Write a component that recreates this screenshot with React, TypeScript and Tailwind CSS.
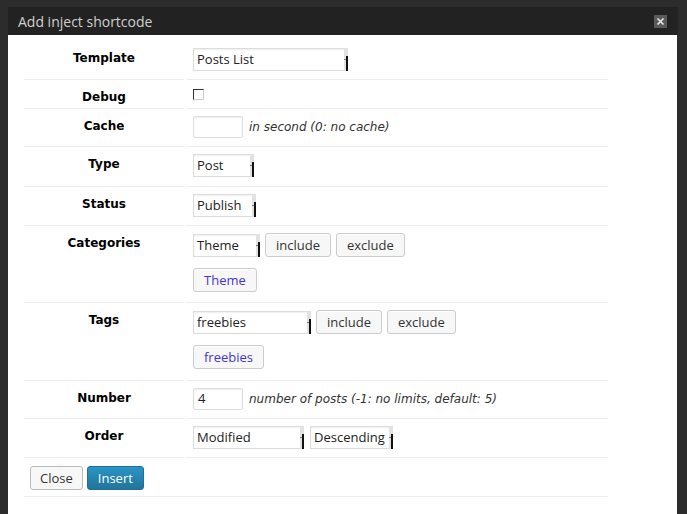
import React from 'react';

const label = "font-['DejaVu_Sans',sans-serif] font-bold text-[12px] leading-[16px] text-black";
const ui = "font-['Open_Sans',sans-serif] text-[13px]";
const hint = "font-['DejaVu_Sans',sans-serif] italic text-[12px] text-[#333]";

function Select({ value, width }: { value: string; width: string }) {
  return (
    <div
      className={`relative h-[23px] ${width} border border-[#dcdcdc] bg-white shadow-[inset_0_1px_2px_rgba(0,0,0,0.07)] flex items-center pl-[3px] ${ui} text-[#222]`}
    >
      <span className="leading-none">{value}</span>
      {/* old-style arrow strip */}
      <span className="absolute right-[-1px] top-[-1px] bottom-[-1px] w-[4px] bg-[#e2e2e2]">
        <span className="absolute right-0 top-[8px] bottom-0 w-[2px] bg-[#111]" />
        <span className="absolute right-[2px] top-[11px] w-[2px] h-[1px] bg-[#777]" />
      </span>
    </div>
  );
}

function Btn({ children, blue }: { children: React.ReactNode; blue?: boolean }) {
  return (
    <button
      className={`h-[24px] px-[10px] rounded-[3px] border border-[#cccccc] bg-[#f7f7f7] shadow-[0_1px_0_#fff_inset] ${ui} leading-none ${blue ? 'text-[#4433dd]' : 'text-[#333]'}`}
    >
      {children}
    </button>
  );
}

function Input({ value }: { value?: string }) {
  return (
    <div
      className={`h-[22px] w-[50px] border border-[#dddddd] rounded-[2px] bg-white shadow-[inset_0_1px_2px_rgba(0,0,0,0.07)] flex items-center pl-[4px] ${ui} text-[#222]`}
    >
      {value}
    </div>
  );
}

function Row({
  name,
  children,
  pt = 'pt-[7px]',
  pb = 'pb-[8px]',
}: {
  name: string;
  children: React.ReactNode;
  pt?: string;
  pb?: string;
}) {
  return (
    <div className="flex">
      <div className={`w-[160px] shrink-0 border-b border-[#ececec] pt-[9px] text-center ${label}`}>{name}</div>
      <div className={`ml-[3px] flex-1 border-b border-[#ececec] ${pt} ${pb} pl-[6px]`}>{children}</div>
    </div>
  );
}

export default function App() {
  return (
    <div className="w-[687px] h-[514px] overflow-hidden bg-[#2c2c2c] pt-[7px] pl-[8px]">
      <div className="w-[670px] h-[507px] flex flex-col">
        <div className="h-[28px] bg-[#222222] flex items-center justify-between pl-[10px] pr-[11px]">
          <span className="font-['Open_Sans',sans-serif] text-[14px] text-[#d0d0d0]">Add inject shortcode</span>
          <span className="w-[13px] h-[13px] bg-[#5a5a5a] flex items-center justify-center">
            <svg width="9" height="9" viewBox="0 0 9 9">
              <path d="M1.5 1.5l6 6M7.5 1.5l-6 6" stroke="#e8e8e8" strokeWidth="1.6" />
            </svg>
          </span>
        </div>
        <div className="flex-1 bg-white pt-[6px] pl-[16px] w-[669px]">
          <div className="w-[584px]">
            <Row name="Template">
              <Select value="Posts List" width="w-[155px]" />
            </Row>
            <Row name="Debug" pb="pb-[7px]">
              <div className="h-[14px] flex items-center">
                <span className="w-[11px] h-[11px] border-t border-l border-[#333] border-b border-r border-b-[#ccc] border-r-[#ccc] bg-white" />
              </div>
            </Row>
            <Row name="Cache">
              <div className="flex items-center gap-[6px]">
                <Input />
                <span className={hint}>in second (0: no cache)</span>
              </div>
            </Row>
            <Row name="Type" pb="pb-[9px]">
              <Select value="Post" width="w-[61px]" />
            </Row>
            <Row name="Status">
              <Select value="Publish" width="w-[63px]" />
            </Row>
            <Row name="Categories" pb="pb-[10px]">
              <div className="flex items-center gap-[5px]">
                <Select value="Theme" width="w-[67px]" />
                <Btn>include</Btn>
                <Btn>exclude</Btn>
              </div>
              <div className="mt-[11px] flex">
                <Btn blue>Theme</Btn>
              </div>
            </Row>
            <Row name="Tags" pb="pb-[11px]">
              <div className="flex items-center gap-[5px]">
                <Select value="freebies" width="w-[118px]" />
                <Btn>include</Btn>
                <Btn>exclude</Btn>
              </div>
              <div className="mt-[11px] flex">
                <Btn blue>freebies</Btn>
              </div>
            </Row>
            <Row name="Number">
              <div className="flex items-center gap-[6px]">
                <Input value="4" />
                <span className={hint}>number of posts (-1: no limits, default: 5)</span>
              </div>
            </Row>
            <Row name="Order">
              <div className="flex items-center gap-[6px]">
                <Select value="Modified" width="w-[111px]" />
                <Select value="Descending" width="w-[83px]" />
              </div>
            </Row>
            <div className="border-b border-[#ececec] pt-[8px] pb-[6px] pl-[6px] flex gap-[4px]">
              <button className={`h-[24px] px-[9px] rounded-[3px] border border-[#bbb] bg-[#f7f7f7] ${ui} text-[#333] leading-none`}>
                Close
              </button>
              <button className={`h-[24px] px-[10px] rounded-[3px] border border-[#1f6f98] bg-gradient-to-b from-[#2a95c5] to-[#21759b] ${ui} text-white leading-none`}>
                Insert
              </button>
            </div>
          </div>
        </div>
      </div>
    </div>
  );
}
